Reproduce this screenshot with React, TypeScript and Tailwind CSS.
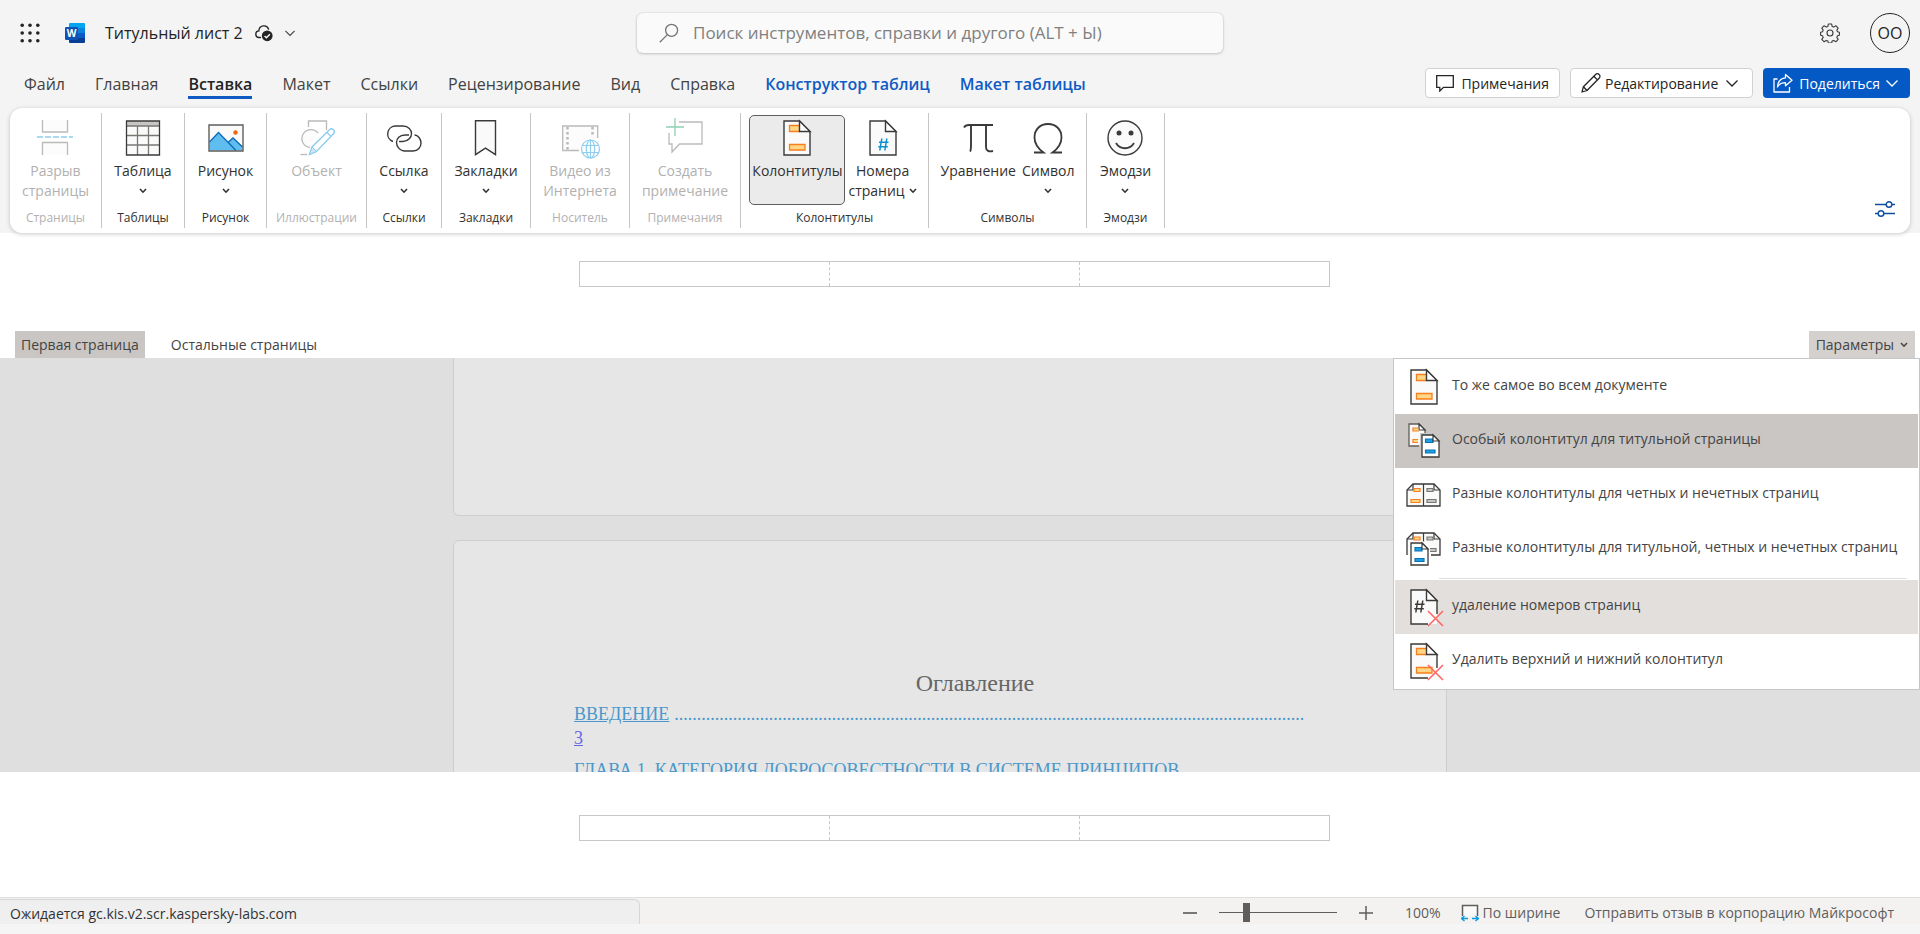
import type { ReactNode } from "react";
import clsx from "clsx";

interface IconProps {
  className?: string;
}

interface RibbonItem {
  label: string[];
  icon: ReactNode;
  arrow?: "below" | "inline";
  active?: boolean;
}

interface RibbonGroupProps {
  title: string;
  width: string;
  items: RibbonItem[];
  disabled?: boolean;
}

interface MenuItem {
  label: string;
  icon: ReactNode;
  state?: "selected" | "hover";
}

/* ---------- Icons ---------- */

const Chevron = ({ className }: IconProps) => (
  <svg viewBox="0 0 12 12" className={clsx("shrink-0", className)} fill="none" stroke="currentColor" strokeWidth="1.3" aria-hidden="true">
    <path d="M0.5 3.5 6 9 11.5 3.5" />
  </svg>
);

const SmallArrow = () => (
  <svg viewBox="0 0 8 6" className="h-[6px] w-2 shrink-0" fill="none" stroke="currentColor" strokeWidth="1.6" aria-hidden="true">
    <path d="M1 1 4 4.2 7 1" />
  </svg>
);

const WaffleIcon = () => (
  <svg viewBox="0 0 20 20" className="size-5" fill="#242424" aria-hidden="true">
    {[2.2, 10, 17.8].map((y) =>
      [2.2, 10, 17.8].map((x) => <circle key={`${x}-${y}`} cx={x} cy={y} r="1.8" />)
    )}
  </svg>
);

const WordIcon = () => (
  <svg viewBox="0 0 20 20" className="size-5" aria-hidden="true">
    <path d="M5 0h14a1 1 0 0 1 1 1v4H4V1a1 1 0 0 1 1-1z" fill="#03a5f0" />
    <path d="M4 5h16v5H4z" fill="#0a84dc" />
    <path d="M4 10h16v5H4z" fill="#0a5cc4" />
    <path d="M4 15h16v4a1 1 0 0 1-1 1H5a1 1 0 0 1-1-1z" fill="#0a3e94" />
    <rect y="4" width="13" height="13" rx="1.2" fill="#0f52b5" />
    <text x="6.5" y="14" textAnchor="middle" fontSize="10" fontWeight="700" fill="#fff" fontFamily="Open Sans, sans-serif">
      W
    </text>
  </svg>
);

const CloudSavedIcon = () => (
  <svg viewBox="0 0 18 18" className="size-[18px]" fill="none" aria-hidden="true">
    <path
      d="M5.5 13.500H4.300a3.300 3.300 0 0 1-.4-6.600 5 5 0 0 1 9.700-1.700"
      stroke="#242424"
      strokeWidth="1.3"
      strokeLinecap="round"
    />
    <circle cx="12.2" cy="11.8" r="5.4" fill="#242424" />
    <path d="M9.6 12l1.800 1.800 3.500-3.600" stroke="#fff" strokeWidth="1.3" />
  </svg>
);

const SearchIcon = () => (
  <svg viewBox="0 0 20 20" className="size-5 shrink-0" fill="none" stroke="#757575" strokeWidth="1.3" aria-hidden="true">
    <circle cx="12.6" cy="7.3" r="6" />
    <path d="M8.4 11.6.8 19.2" />
  </svg>
);

const GearIcon = () => (
  <svg viewBox="0 0 20 20" className="size-5" fill="none" stroke="#3b3a39" strokeWidth="1.1" strokeLinejoin="round" aria-hidden="true">
    <path d="M8.3 1h3.4l.4 2.4 1.7.7 2-1.4 2.4 2.4-1.4 2 .7 1.7 1.9.4v3l-1.9.5-.7 1.7 1.4 2-2.4 2.4-2-1.4-1.7.7-.4 1.9H8.3l-.4-1.9-1.7-.7-2 1.4-2.4-2.4 1.4-2-.7-1.7-1.9-.5v-3l1.9-.4.7-1.7-1.4-2 2.4-2.4 2 1.4 1.7-.7z" />
    <circle cx="10" cy="10" r="3" />
  </svg>
);

const CommentIcon = () => (
  <svg viewBox="0 0 18 18" className="size-[18px]" fill="none" stroke="#242424" strokeWidth="1.3" aria-hidden="true">
    <path d="M.7 1.7h16.6v11.6H7.5L3.8 17v-3.7H.7z" />
  </svg>
);

const PencilIcon = () => (
  <svg viewBox="0 0 20 20" className="size-5" fill="none" stroke="#242424" strokeWidth="1.3" strokeLinejoin="round" aria-hidden="true">
    <path d="M1 19l1.4-5.3L14.6 1.5a2.3 2.3 0 0 1 3.5 0 2.4 2.4 0 0 1 0 3.7L6 17.5z" />
    <path d="M12.8 3.3l3.7 3.6M2.4 13.7L6 17.5" />
  </svg>
);

const ShareIcon = () => (
  <svg viewBox="0 0 20 20" className="size-5" fill="none" stroke="#fff" strokeWidth="1.3" strokeLinejoin="round" aria-hidden="true">
    <path d="M4.5 6H1v13h15.5v-5" />
    <path d="M12.5 1.5 19 7.2l-6.5 5.6V9.7C8.5 9.7 6 11.2 4.5 14c.3-5 3-8.7 8-9.2z" />
  </svg>
);

const SlidersIcon = () => (
  <svg viewBox="0 0 22 18" className="h-[18px] w-[22px]" fill="none" stroke="#0f4f9e" strokeWidth="1.4" aria-hidden="true">
    <path d="M1 4.5h11M18 4.5h3M1 13.5h3M10 13.5h11" />
    <circle cx="15" cy="4.5" r="2.8" />
    <circle cx="7" cy="13.5" r="2.8" />
  </svg>
);

const RibbonSvg = ({ children }: { children: ReactNode }) => (
  <svg viewBox="0 0 36 36" className="size-9 shrink-0 overflow-visible" fill="none" aria-hidden="true">
    {children}
  </svg>
);

const PageBreakIcon = () => (
  <RibbonSvg>
    <path d="M5.5 0v12h25V0" fill="#fafafa" stroke="#797774" strokeWidth="1.3" />
    <path d="M5.5 35V22.500h25V35" fill="#fafafa" stroke="#797774" strokeWidth="1.3" />
    <path d="M0 17h36" stroke="#1e9ee0" strokeWidth="1.5" strokeDasharray="6 2" />
  </RibbonSvg>
);

const TableIcon = () => (
  <RibbonSvg>
    <path d="M1.500 1h33v34h-33z" fill="#fafafa" />
    <path d="M1.500 1h33v5h-33z" fill="#c8c6c4" />
    <path d="M1.500 6h33M1.500 15.500h33M1.500 25h33M12.500 6v29M23.500 6v29" stroke="#797774" strokeWidth="1.3" />
    <path d="M1.500 1h33v34h-33z" stroke="#3b3a39" strokeWidth="1.3" />
  </RibbonSvg>
);

const PictureIcon = () => (
  <RibbonSvg>
    <path d="M1 5h34v26H1z" fill="#fafafa" />
    <path d="M1.500 22 10.500 12.500 20 22l5-4.500 9.500 9V30.500h-33z" fill="#5fbdf0" />
    <path d="M1.500 22 10.500 12.500 28 30.500M20 22.500l5-4.500 9.500 9" stroke="#0f6cb8" strokeWidth="1.3" />
    <circle cx="27.5" cy="12.5" r="2.2" fill="#f7630c" />
    <path d="M1 5h34v26H1z" stroke="#605e5c" strokeWidth="1.4" />
  </RibbonSvg>
);

const ShapesIcon = () => (
  <RibbonSvg>
    <path d="M9.500 7V1h18v9" stroke="#797774" strokeWidth="1.3" />
    <path d="M19 13a9 9 0 1 0-8 14.500" fill="#fafafa" stroke="#797774" strokeWidth="1.3" />
    <path d="M1.500 34.500H8" stroke="#797774" strokeWidth="1.3" />
    <path d="M10.500 34.500l2.500-7.500L30.500 9.800a2.800 2.800 0 0 1 4 4L17.500 31.500z" fill="#fff" stroke="#1e9ee0" strokeWidth="1.4" />
    <path d="M13 27l4.500 4.500-7 3z" fill="#9ed3f2" stroke="#1e9ee0" />
    <path d="M28 12.500l4 4" stroke="#1e9ee0" strokeWidth="1.2" />
  </RibbonSvg>
);

const LinkIcon = () => (
  <RibbonSvg>
    <path d="M7 21.500A8 8 0 0 1 9 6h8c5.500 0 8.500 4 8.500 7.500S22.500 21.500 17 21.500h-4" stroke="#3b3a39" strokeWidth="1.4" />
    <path d="M23 15h-4c-5.500 0-8.500 3.800-8.500 7.500S13.500 31 19 31h8c5.200 0 8-4 8-8s-3-8-6.500-8" stroke="#3b3a39" strokeWidth="1.4" />
  </RibbonSvg>
);

const BookmarkIcon = () => (
  <RibbonSvg>
    <path d="M7.500.700h20v34l-10-6.500-10 6.500z" fill="#fafafa" stroke="#3b3a39" strokeWidth="1.4" />
  </RibbonSvg>
);

const VideoIcon = () => (
  <RibbonSvg>
    <path d="M17 30.500H.700V6h35v12" fill="#fafafa" stroke="#797774" strokeWidth="1.3" />
    <path d="M5.500 7v23M30.500 7v10" stroke="#797774" strokeWidth="2.5" strokeDasharray="2.5 2.5" />
    <circle cx="28.5" cy="29" r="10" fill="#fff" />
    <g stroke="#1e9ee0" strokeWidth="1.2">
      <circle cx="28.5" cy="29" r="9" />
      <ellipse cx="28.5" cy="29" rx="4.2" ry="9" />
      <path d="M20.500 25.500h16M20.500 32.500h16M28.500 20v18" />
    </g>
  </RibbonSvg>
);

const NewCommentIcon = () => (
  <RibbonSvg>
    <path d="M12 2h23v22H12.500l-7.500 8v-8H2V13" stroke="#797774" strokeWidth="1.3" />
    <path d="M8-2v18M-1 7h18" stroke="#21a366" strokeWidth="1.3" />
  </RibbonSvg>
);

// Red cross in the lower right corner of the "remove" icons
const Cross = () => <path d="M22 22l15 15M37 22L22 37" stroke="#ff6464" strokeWidth="1.5" />;

const Hash = ({ color }: { color: string }) => (
  <path d="M16.800 18.500l-2 12M21.800 18.500l-2 12M14 22.300h9.500M13.300 26.800h9.500" stroke={color} strokeWidth="1.5" />
);

// Sheet with a folded corner, left open where the cross goes
const Sheet = ({ children, cross }: { children: ReactNode; cross?: boolean }) => (
  <RibbonSvg>
    <path d="M5 1h15.500L31 11.500V35H5z" fill="#fafafa" />
    {children}
    <path
      d={cross ? "M22 35H5V1h15.500L31 11.500V25" : "M5 1h15.500L31 11.500V35H5z"}
      stroke="#3b3a39"
      strokeWidth="1.4"
    />
    <path d="M20.500 1v10.500H31z" fill="#fff" stroke="#3b3a39" strokeWidth="1.4" />
    {cross && <Cross />}
  </RibbonSvg>
);

const HeaderFooterIcon = ({ cross }: { cross?: boolean }) => (
  <Sheet cross={cross}>
    <path d="M20.500 5.500h-10v6h10" fill="#ffd685" stroke="#f7801e" strokeWidth="1.3" />
    <path d="M10.500 24.500h15.500v5.500h-15.500z" fill="#ffd685" stroke="#f7801e" strokeWidth="1.3" />
  </Sheet>
);

const PageNumberIcon = () => (
  <Sheet>
    <Hash color="#0b8fd0" />
  </Sheet>
);

const RemoveNumbersIcon = () => (
  <Sheet cross>
    <g transform="translate(-5 -7)">
      <Hash color="#3b3a39" />
    </g>
  </Sheet>
);

const FirstPageIcon = () => (
  <RibbonSvg>
    <path d="M13 23H3V1h10l6 6v3" fill="#fafafa" stroke="#605e5c" strokeWidth="1.3" />
    <path d="M13 1v6h6z" fill="#fff" stroke="#3b3a39" strokeWidth="1.2" />
    <path d="M12 5H7v3h6M12 16.500H7v3h5" fill="#ffd685" stroke="#f7801e" strokeWidth="1.2" />
    <path d="M14 10h14v25H14z" fill="#cac6c3" />
    <path d="M16 12h11l6 6v16H16z" fill="#fff" stroke="#3b3a39" strokeWidth="1.3" />
    <path d="M19.500 16H27v3.500h-7.500zM19.500 27h9.500v3h-9.500z" fill="#1ea0e0" stroke="#0b72b8" strokeWidth="1.2" />
    <path d="M27 12v6h6z" fill="#fff" stroke="#3b3a39" strokeWidth="1.2" />
  </RibbonSvg>
);

const OddEvenIcon = () => (
  <RibbonSvg>
    <path d="M1 29V13l6-6h21l6 6v16z" fill="#fafafa" stroke="#3b3a39" strokeWidth="1.3" />
    <path d="M7 7v6H1M28 7v6h6M17.500 7v22" stroke="#3b3a39" strokeWidth="1.2" />
    <path d="M8 11.500h6v3H8zM5 22.500h9v3H5z" fill="#ffd685" stroke="#f7801e" strokeWidth="1.2" />
    <path d="M21 11.500h6v3h-6zM21 22.500h9v3h-9z" fill="#c8c6c4" stroke="#797774" strokeWidth="1.2" />
  </RibbonSvg>
);

const FirstOddEvenIcon = () => (
  <RibbonSvg>
    <path d="M1 24V8l6-6h21l6 6v16h-9" fill="#fafafa" stroke="#3b3a39" strokeWidth="1.3" />
    <path d="M7 2v6H1M28 2v6h6M17.500 2v9" stroke="#3b3a39" strokeWidth="1.2" />
    <path d="M8 6h6v3H8z" fill="#ffd685" stroke="#f7801e" strokeWidth="1.2" />
    <path d="M21 6h6v3h-6zM22 17.500h8v3h-8z" fill="#c8c6c4" stroke="#797774" strokeWidth="1.2" />
    <path d="M3 10h14l7 7v19H3z" fill="#fff" />
    <path d="M5 12h11l6 6v16H5z" fill="#fff" stroke="#3b3a39" strokeWidth="1.3" />
    <path d="M9 16.500h7V20H9zM9 27.500h9v3H9z" fill="#1ea0e0" stroke="#0b72b8" strokeWidth="1.2" />
    <path d="M16 12v6h6z" fill="#fff" stroke="#3b3a39" strokeWidth="1.2" />
  </RibbonSvg>
);

const EquationIcon = () => (
  <RibbonSvg>
    <path d="M4 7.500C5 5.500 7 5 9 5h24M11 5v20c0 4-.5 6-1 6.500M26 5v22c0 4 3 5 7 4" stroke="#3b3a39" strokeWidth="1.9" />
  </RibbonSvg>
);

const SymbolIcon = () => (
  <RibbonSvg>
    <path d="M4 32.500h9.500C8 28.500 4.500 24 4.500 17.500c0-8 5.500-13.500 13.500-13.500s13.500 5.500 13.500 13.500c0 6.500-3.500 11-9 15H32" stroke="#3b3a39" strokeWidth="1.8" />
  </RibbonSvg>
);

const EmojiIcon = () => (
  <RibbonSvg>
    <circle cx="18" cy="18" r="17" fill="#fafafa" stroke="#3b3a39" strokeWidth="1.4" />
    <circle cx="12" cy="13" r="2.5" fill="#3b3a39" />
    <circle cx="24" cy="13" r="2.5" fill="#3b3a39" />
    <path d="M9 23c4 7 14 7 18 0" stroke="#3b3a39" strokeWidth="1.8" />
  </RibbonSvg>
);

const FitWidthIcon = () => (
  <svg viewBox="0 0 18 18" className="size-[18px]" fill="none" aria-hidden="true">
    <path d="M1.500 12V1.500h15V12" fill="#fafafa" stroke="#605e5c" strokeWidth="1.5" />
    <path d="M.5 14.500h6.500M11 14.500h6.500M3.500 12l-3 2.500 3 2.500M14.500 12l3 2.500-3 2.500" stroke="#0b9be0" strokeWidth="1.4" />
  </svg>
);

/* ---------- Data ---------- */

const tabs = ["Файл", "Главная", "Вставка", "Макет", "Ссылки", "Рецензирование", "Вид", "Справка", "Конструктор таблиц", "Макет таблицы"];

const groups: RibbonGroupProps[] = [
  { title: "Страницы", width: "w-[92px]", disabled: true, items: [{ label: ["Разрыв", "страницы"], icon: <PageBreakIcon /> }] },
  { title: "Таблицы", width: "w-[83px]", items: [{ label: ["Таблица"], icon: <TableIcon />, arrow: "below" }] },
  { title: "Рисунок", width: "w-[82px]", items: [{ label: ["Рисунок"], icon: <PictureIcon />, arrow: "below" }] },
  { title: "Иллюстрации", width: "w-[100px]", disabled: true, items: [{ label: ["Объект"], icon: <ShapesIcon /> }] },
  { title: "Ссылки", width: "w-[75px]", items: [{ label: ["Ссылка"], icon: <LinkIcon />, arrow: "below" }] },
  { title: "Закладки", width: "w-[89px]", items: [{ label: ["Закладки"], icon: <BookmarkIcon />, arrow: "below" }] },
  { title: "Носитель", width: "w-[99px]", disabled: true, items: [{ label: ["Видео из", "Интернета"], icon: <VideoIcon /> }] },
  { title: "Примечания", width: "w-[111px]", disabled: true, items: [{ label: ["Создать", "примечание"], icon: <NewCommentIcon /> }] },
  {
    title: "Колонтитулы",
    width: "w-[188px]",
    items: [
      { label: ["Колонтитулы"], icon: <HeaderFooterIcon />, active: true },
      { label: ["Номера", "страниц"], icon: <PageNumberIcon />, arrow: "inline" },
    ],
  },
  {
    title: "Символы",
    width: "w-[158px]",
    items: [
      { label: ["Уравнение"], icon: <EquationIcon /> },
      { label: ["Символ"], icon: <SymbolIcon />, arrow: "below" },
    ],
  },
  { title: "Эмодзи", width: "w-[78px]", items: [{ label: ["Эмодзи"], icon: <EmojiIcon />, arrow: "below" }] },
];

const menuTop: MenuItem[] = [
  { label: "То же самое во всем документе", icon: <HeaderFooterIcon /> },
  { label: "Особый колонтитул для титульной страницы", icon: <FirstPageIcon />, state: "selected" },
  { label: "Разные колонтитулы для четных и нечетных страниц", icon: <OddEvenIcon /> },
  { label: "Разные колонтитулы для титульной, четных и нечетных страниц", icon: <FirstOddEvenIcon /> },
];

const menuBottom: MenuItem[] = [
  { label: "удаление номеров страниц", icon: <RemoveNumbersIcon />, state: "hover" },
  { label: "Удалить верхний и нижний колонтитул", icon: <HeaderFooterIcon cross /> },
];

/* ---------- Sections ---------- */

const TitleBar = () => (
  <header className="flex items-center justify-between px-[10px] pt-[13px]">
    <div className="flex flex-1 items-center">
      <button type="button" aria-label="Приложения" className="px-[10px]">
        <WaffleIcon />
      </button>
      <span className="ml-[15px]">
        <WordIcon />
      </span>
      <button type="button" className="ml-5 flex items-center text-base leading-6 text-[#242424]">
        <span>Титульный лист 2</span>
        <span className="ml-3">
          <CloudSavedIcon />
        </span>
        <Chevron className="ml-3 size-[10px] text-[#424242]" />
      </button>
    </div>
    <label className="mr-[60px] flex h-10 w-[586px] items-center rounded-md bg-[#fafafa] px-[22px] shadow-[0_0_2px_rgba(0,0,0,0.14),0_1px_3px_rgba(0,0,0,0.18)]">
      <SearchIcon />
      <input
        type="search"
        aria-label="Поиск"
        placeholder="Поиск инструментов, справки и другого (ALT + Ы)"
        className="ml-[14px] w-full bg-transparent text-[17px] outline-none placeholder:text-[#808080]"
      />
    </label>
    <div className="flex flex-1 items-center justify-end gap-[30px]">
      <button type="button" aria-label="Параметры приложения">
        <GearIcon />
      </button>
      <button type="button" className="size-10 rounded-full border border-[#242424] text-base text-[#242424]">
        OO
      </button>
    </div>
  </header>
);

const TabBar = () => (
  <div className="flex items-start justify-between pt-[15px] pr-[10px] pb-[9px] pl-6">
    <nav className="flex gap-[30px] text-base leading-6 text-[#424242]">
      {tabs.map((tab, index) => (
        <button
          key={tab}
          type="button"
          className={clsx(
            "border-b-3 pt-1 whitespace-nowrap",
            tab === "Вставка" ? "border-[#0f5bc4] font-semibold text-[#242424]" : "border-transparent",
            index > 7 && "font-semibold text-[#0f5bc4]"
          )}
        >
          {tab}
        </button>
      ))}
    </nav>
    <div className="flex gap-[10px] text-[14px] text-[#242424]">
      <button type="button" className="flex h-[30px] items-center gap-[7px] rounded border border-[#d1d1d1] bg-white px-[10px]">
        <CommentIcon />
        Примечания
      </button>
      <button type="button" className="flex h-[30px] items-center gap-1 rounded border border-[#d1d1d1] bg-white px-[10px]">
        <PencilIcon />
        Редактирование
        <Chevron className="mx-1 size-3" />
      </button>
      <button type="button" className="flex h-[30px] items-center gap-[6px] rounded bg-[#0459c4] px-[10px] text-white">
        <ShareIcon />
        Поделиться
        <Chevron className="mr-[2px] size-3" />
      </button>
    </div>
  </div>
);

const RibbonButton = ({ item, disabled }: { item: RibbonItem; disabled?: boolean }) => (
  <button
    type="button"
    disabled={disabled}
    className={clsx(
      "flex h-[90px] flex-col items-center rounded-[5px] border px-[2px] pt-1 text-[14px] leading-5 whitespace-nowrap",
      item.active ? "border-[#605e5c] bg-[#ebebeb]" : "border-transparent",
      disabled ? "text-[#b1b1b1]" : "text-[#323130]"
    )}
  >
    <span className={clsx("mb-[5px]", disabled && "opacity-50")}>{item.icon}</span>
    {item.label.map((line, index) => (
      <span key={line} className="flex items-center gap-1">
        {line}
        {item.arrow === "inline" && index === item.label.length - 1 && <SmallArrow />}
      </span>
    ))}
    {item.arrow === "below" && (
      <span className="flex h-5 items-center">
        <SmallArrow />
      </span>
    )}
  </button>
);

const RibbonGroup = ({ title, width, items, disabled }: RibbonGroupProps) => (
  <div className={clsx("flex shrink-0 flex-col items-center border-r border-[#c8c6c4]", width)}>
    <div className="flex pt-[2px]">
      {items.map((item) => (
        <RibbonButton key={item.label[0]} item={item} disabled={disabled} />
      ))}
    </div>
    <span className={clsx("mt-1 text-[12px] leading-[18px]", disabled ? "text-[#b1b1b1]" : "text-[#323130]")}>{title}</span>
  </div>
);

const Ribbon = () => (
  <div className="relative z-10 mx-[10px] flex items-end justify-between rounded-xl bg-white py-[5px] shadow-[0_1px_4px_rgba(0,0,0,0.22)]">
    <div className="flex h-[115px]">
      {groups.map((group) => (
        <RibbonGroup key={group.title} {...group} />
      ))}
    </div>
    <button type="button" aria-label="Параметры ленты" className="mr-[14px] mb-[10px]">
      <SlidersIcon />
    </button>
  </div>
);

const HeaderFooterTable = () => (
  <table className="mx-auto w-[751px] table-fixed border-collapse border border-[#c8c8c8]">
    <tbody>
      <tr>
        <td className="h-[25px]" />
        <td className="border-x border-dashed border-[#c8c8c8]" />
        <td />
      </tr>
    </tbody>
  </table>
);

const OptionRow = ({ item }: { item: MenuItem }) => (
  <button
    type="button"
    role="menuitem"
    className={clsx(
      "flex h-[54px] w-full items-start pl-[11px] text-left",
      item.state === "selected" && "bg-[#cac6c3]",
      item.state === "hover" && "bg-[#e3dfdc]"
    )}
  >
    <span className="pt-[9px]">{item.icon}</span>
    <span className="ml-[10px] pt-[14px] text-[14px] leading-[22px] whitespace-nowrap">{item.label}</span>
  </button>
);

const OptionsMenu = () => (
  <div role="menu" className="absolute top-full right-0 z-10 w-[527px] border border-[#c6c6c6] bg-white p-px text-[#444]">
    {menuTop.map((item) => (
      <OptionRow key={item.label} item={item} />
    ))}
    <hr className="mt-[2px] mr-[11px] mb-px ml-[44px] border-[#e1dfdd]" />
    {menuBottom.map((item) => (
      <OptionRow key={item.label} item={item} />
    ))}
  </div>
);

const HeaderEditor = () => (
  <section className="relative bg-white pt-7">
    <div className="pr-[11px] pb-11">
      <HeaderFooterTable />
    </div>
    <div className="flex justify-between pr-[5px] pl-[15px] text-[14px] leading-[27px] text-[#444]">
      <div className="flex gap-5">
        <button type="button" className="bg-[#cac6c3] px-[6px]">
          Первая страница
        </button>
        <button type="button" className="px-[6px]">
          Остальные страницы
        </button>
      </div>
      <button type="button" className="flex items-center gap-[6px] bg-[#d4d0cd] px-[7px]">
        Параметры
        <SmallArrow />
      </button>
    </div>
    <OptionsMenu />
  </section>
);

const Document = () => (
  <main className="min-h-0 flex-1 overflow-hidden bg-[#dfdfdf] pr-5">
    <div className="mx-auto flex max-w-[994px] flex-col gap-6 font-['Liberation_Serif',serif]">
      <div className="h-[158px] rounded-b-md border border-t-0 border-[#cecece] bg-[#e6e6e6]" />
      <article className="rounded-t-md border border-[#cecece] bg-[#e6e6e6] px-[120px] pt-[126px] pb-20 text-[18px] leading-6 text-[#4a98cb]">
        <h1 className="mb-[3px] pl-[50px] text-center text-2xl leading-8 text-[#666]">Оглавление</h1>
        <p className="flex w-[731px] overflow-hidden whitespace-nowrap">
          <a href="#intro" className="underline">
            ВВЕДЕНИЕ
          </a>
          <span className="ml-[5px] overflow-hidden">{".".repeat(140)}</span>
        </p>
        <p>
          <a href="#intro" className="text-[#6a64e8] underline">
            3
          </a>
        </p>
        <p className="mt-2 whitespace-nowrap">
          <a href="#chapter-1" className="underline">
            ГЛАВА 1. КАТЕГОРИЯ ДОБРОСОВЕСТНОСТИ В СИСТЕМЕ ПРИНЦИПОВ
          </a>
        </p>
      </article>
    </div>
  </main>
);

const StatusBar = () => (
  <footer className="bg-[#f5f5f5] pb-[10px]">
    <div className="flex h-[27px] items-center justify-between border-t border-[#e1dfdd] bg-[#f3f2f1] text-[14px] text-[#605e5c]">
      <p className="mt-px h-[25px] w-1/3 rounded-tr-md border-t border-r border-[#d6d6d6] bg-[#efefef] pl-[10px] leading-7 text-[#333]">
        Ожидается gc.kis.v2.scr.kaspersky-labs.com
      </p>
      <div className="flex items-center pt-[3px] pr-[26px]">
        <button type="button" aria-label="Уменьшить" className="flex size-[14px] items-center">
          <span className="h-[2px] w-full bg-[#797774]" />
        </button>
        <input
          type="range"
          aria-label="Масштаб"
          min={10}
          max={500}
          defaultValue={115}
          className="mx-[22px] h-5 w-[118px] appearance-none bg-transparent [&::-webkit-slider-runnable-track]:h-px [&::-webkit-slider-runnable-track]:bg-[#605e5c] [&::-webkit-slider-thumb]:-mt-[9px] [&::-webkit-slider-thumb]:h-[19px] [&::-webkit-slider-thumb]:w-[7px] [&::-webkit-slider-thumb]:appearance-none [&::-webkit-slider-thumb]:bg-[#605e5c]"
        />
        <button type="button" aria-label="Увеличить">
          <svg viewBox="0 0 14 14" className="size-[14px]" stroke="#605e5c" strokeWidth="1.5" aria-hidden="true">
            <path d="M7 0v14M0 7h14" />
          </svg>
        </button>
        <button type="button" className="ml-8">
          100%
        </button>
        <button type="button" className="ml-5 flex items-center gap-1">
          <FitWidthIcon />
          По ширине
        </button>
        <button type="button" className="ml-6">
          Отправить отзыв в корпорацию Майкрософт
        </button>
      </div>
    </div>
  </footer>
);

export default function App() {
  return (
    <div className="flex h-screen flex-col overflow-hidden bg-white font-['Open_Sans','Noto_Sans',sans-serif]">
      <div className="bg-[#f4f4f4]">
        <TitleBar />
        <TabBar />
        <Ribbon />
      </div>
      <HeaderEditor />
      <Document />
      <section className="bg-white pt-[43px] pr-[11px] pb-14">
        <HeaderFooterTable />
      </section>
      <StatusBar />
    </div>
  );
}
